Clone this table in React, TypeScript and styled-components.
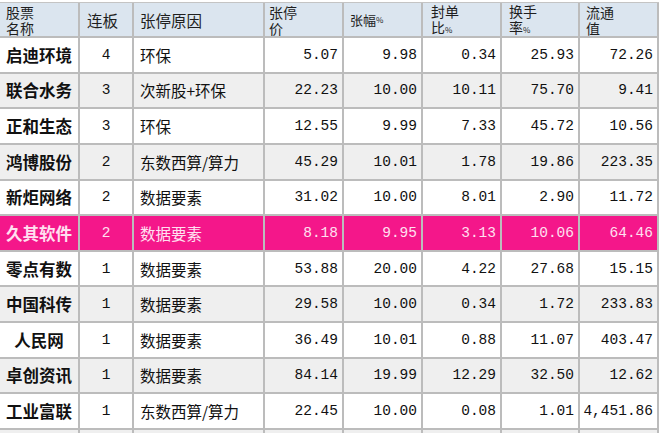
import styled, { createGlobalStyle } from 'styled-components'

const GlobalStyle = createGlobalStyle`
  html, body {
    margin: 0;
    padding: 0;
    background: #fff;
    overflow: hidden;
  }
`

const CJK = `"Noto Sans CJK SC", "Noto Sans", sans-serif`
const NUM = `"Liberation Mono", "DejaVu Sans Mono", monospace`
const COLS = '80px 54px 131px 79px 79px 79px 78px 79px'

type Tone = 'white' | 'grey' | 'pink'

const stocks = [
  ['启迪环境', '4', '环保', '5.07', '9.98', '0.34', '25.93', '72.26'],
  ['联合水务', '3', '次新股+环保', '22.23', '10.00', '10.11', '75.70', '9.41'],
  ['正和生态', '3', '环保', '12.55', '9.99', '7.33', '45.72', '10.56'],
  ['鸿博股份', '2', '东数西算/算力', '45.29', '10.01', '1.78', '19.86', '223.35'],
  ['新炬网络', '2', '数据要素', '31.02', '10.00', '8.01', '2.90', '11.72'],
  ['久其软件', '2', '数据要素', '8.18', '9.95', '3.13', '10.06', '64.46'],
  ['零点有数', '1', '数据要素', '53.88', '20.00', '4.22', '27.68', '15.15'],
  ['中国科传', '1', '数据要素', '29.58', '10.00', '0.34', '1.72', '233.83'],
  ['人民网', '1', '数据要素', '36.49', '10.01', '0.88', '11.07', '403.47'],
  ['卓创资讯', '1', '数据要素', '84.14', '19.99', '12.29', '32.50', '12.62'],
  ['工业富联', '1', '东数西算/算力', '22.45', '10.00', '0.08', '1.01', '4,451.86']
]

const HIGHLIGHT = '久其软件'

const Table = styled.div`
  margin-top: 2px;
  width: 659px;
  border-top: 1px solid #c4c4c4;
`

const HeaderRow = styled.div`
  display: grid;
  grid-template-columns: ${COLS};
  height: 35px;
  background: #dbe5ef;
  border-bottom: 2px solid #bcbcbc;
  box-sizing: border-box;
`

const HeadCell = styled.div<{ $pad?: number }>`
  display: flex;
  align-items: center;
  padding: 0 0 0 ${p => p.$pad ?? 6}px;
  border-right: 2px solid #bcbcbc;
  font-family: ${CJK};
  color: #1e1e1e;
  font-size: 15.5px;
  line-height: 18px;
`

const Stack = styled.span`
  display: block;
  font-size: 14px;
  line-height: 15px;
  margin-top: 1px;
`

const Small = styled.span`
  font-size: 13px;
`

const Pct = styled.span`
  font-size: 8px;
`

const Row = styled.div<{ $tone: Tone }>`
  display: grid;
  grid-template-columns: ${COLS};
  height: 35.64px;
  box-sizing: border-box;
  border-bottom: 2px solid #bcbcbc;
  background: ${p =>
    p.$tone === 'pink' ? '#f4178a' : p.$tone === 'grey' ? '#efefef' : '#fff'};
  color: ${p => (p.$tone === 'pink' ? '#ffe0f0' : '#111')};
`

const Cell = styled.div<{ $align: 'left' | 'center' | 'right'; $kind: 'name' | 'text' | 'num' }>`
  display: flex;
  align-items: center;
  justify-content: ${p =>
    p.$align === 'left' ? 'flex-start' : p.$align === 'right' ? 'flex-end' : 'center'};
  padding: ${p => (p.$align === 'right' ? '0 4px 0 0' : p.$align === 'left' ? '0 0 0 6px' : '0')};
  border-right: 2px solid #bcbcbc;
  white-space: nowrap;
  overflow: hidden;
  font-family: ${p => (p.$kind === 'num' ? NUM : CJK)};
  font-size: ${p => (p.$kind === 'name' ? '16.5px' : p.$kind === 'text' ? '15.5px' : '14.5px')};
  font-weight: ${p => (p.$kind === 'name' ? 700 : 400)};
`

const Filler = styled.div`
  display: grid;
  grid-template-columns: ${COLS};
  height: 20px;
  background: #efefef;

  & > div {
    border-right: 2px solid #bcbcbc;
  }
`

export default function App() {
  return (
    <>
      <GlobalStyle />
      <Table>
        <HeaderRow>
          <HeadCell>
            <div>
              <Stack>股票</Stack>
              <Stack>名称</Stack>
            </div>
          </HeadCell>
          <HeadCell $pad={7}>连板</HeadCell>
          <HeadCell>张停原因</HeadCell>
          <HeadCell $pad={4}>
            <div>
              <Stack>张停</Stack>
              <Stack>价</Stack>
            </div>
          </HeadCell>
          <HeadCell>
            <Small>张幅</Small>
            <Pct>%</Pct>
          </HeadCell>
          <HeadCell $pad={8}>
            <div>
              <Stack>封单</Stack>
              <Stack>
                比<Pct>%</Pct>
              </Stack>
            </div>
          </HeadCell>
          <HeadCell $pad={7}>
            <div>
              <Stack>换手</Stack>
              <Stack>
                率<Pct>%</Pct>
              </Stack>
            </div>
          </HeadCell>
          <HeadCell>
            <div>
              <Stack>流通</Stack>
              <Stack>值</Stack>
            </div>
          </HeadCell>
        </HeaderRow>
        {stocks.map((s, i) => {
          const tone: Tone = s[0] === HIGHLIGHT ? 'pink' : i % 2 === 1 ? 'grey' : 'white'
          return (
            <Row key={i} $tone={tone}>
              <Cell $align="center" $kind="name">{s[0]}</Cell>
              <Cell $align="center" $kind="num">{s[1]}</Cell>
              <Cell $align="left" $kind="text">{s[2]}</Cell>
              {s.slice(3).map((v, j) => (
                <Cell key={j} $align="right" $kind="num">{v}</Cell>
              ))}
            </Row>
          )
        })}
        <Filler>
          {Array.from({ length: 8 }, (_, i) => (
            <div key={i} />
          ))}
        </Filler>
      </Table>
    </>
  )
}
